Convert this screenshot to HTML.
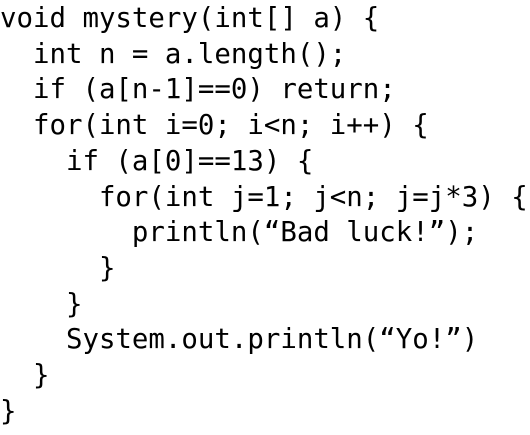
<!DOCTYPE html>
<html><head><style>
html,body{margin:0;padding:0;background:#fff;width:530px;height:435px;overflow:hidden}
pre{margin:0;padding:1px 0 0 0;font-family:"DejaVu Sans Mono","Liberation Mono",monospace;font-size:27.4px;line-height:35.7px;color:#000}
</style></head><body><pre>void mystery(int[] a) {
  int n = a.length();
  if (a[n-1]==0) return;
  for(int i=0; i&lt;n; i++) {
    if (a[0]==13) {
      for(int j=1; j&lt;n; j=j*3) {
        println(“Bad luck!”);
      }
    }
    System.out.println(“Yo!”)
  }
}</pre></body></html>
